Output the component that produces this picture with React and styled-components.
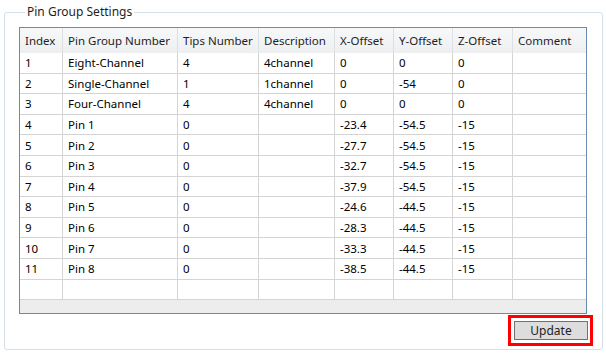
import styled, { createGlobalStyle } from "styled-components";

const GlobalStyle = createGlobalStyle`
  html, body {
    margin: 0;
    padding: 0;
    background: #ffffff;
  }
  body {
    font-family: "Segoe UI", "Noto Sans", "Liberation Sans", sans-serif;
    font-size: 11.5px;
    color: #000000;
  }
`;

const columns = [
  { key: "index", title: "Index", width: 43 },
  { key: "name", title: "Pin Group Number", width: 115 },
  { key: "tips", title: "Tips Number", width: 81 },
  { key: "desc", title: "Description", width: 76 },
  { key: "x", title: "X-Offset", width: 59 },
  { key: "y", title: "Y-Offset", width: 59 },
  { key: "z", title: "Z-Offset", width: 60 },
  { key: "comment", title: "Comment", width: 73 },
];

const rows = [
  ["1", "Eight-Channel", "4", "4channel", "0", "0", "0", ""],
  ["2", "Single-Channel", "1", "1channel", "0", "-54", "0", ""],
  ["3", "Four-Channel", "4", "4channel", "0", "0", "0", ""],
  ["4", "Pin 1", "0", "", "-23.4", "-54.5", "-15", ""],
  ["5", "Pin 2", "0", "", "-27.7", "-54.5", "-15", ""],
  ["6", "Pin 3", "0", "", "-32.7", "-54.5", "-15", ""],
  ["7", "Pin 4", "0", "", "-37.9", "-54.5", "-15", ""],
  ["8", "Pin 5", "0", "", "-24.6", "-44.5", "-15", ""],
  ["9", "Pin 6", "0", "", "-28.3", "-44.5", "-15", ""],
  ["10", "Pin 7", "0", "", "-33.3", "-44.5", "-15", ""],
  ["11", "Pin 8", "0", "", "-38.5", "-44.5", "-15", ""],
  ["", "", "", "", "", "", "", ""],
];

const template = columns.map((c) => `${c.width}px`).join(" ");

export default function App() {
  return (
    <>
      <GlobalStyle />
      <Page>
        <GroupBox>
          <Legend>Pin Group Settings</Legend>
          <Grid>
            <HeaderRow>
              {columns.map((c, i) => (
                <HeaderCell key={c.key} $last={i === columns.length - 1}>
                  {c.title}
                </HeaderCell>
              ))}
            </HeaderRow>
            {rows.map((r, ri) => (
              <Row key={ri}>
                {r.map((v, ci) => (
                  <Cell key={ci} $last={ci === r.length - 1}>
                    {v}
                  </Cell>
                ))}
              </Row>
            ))}
            <ScrollArea />
          </Grid>
          <ButtonRow>
            <Highlight>
              <Button>Update</Button>
            </Highlight>
          </ButtonRow>
        </GroupBox>
      </Page>
    </>
  );
}

const Page = styled.div`
  width: 606px;
  height: 356px;
  box-sizing: border-box;
  padding: 4px 3px 0 4px;
`;

const GroupBox = styled.fieldset`
  margin: 0;
  height: 346px;
  box-sizing: border-box;
  border: 1px solid #d5dfe5;
  border-radius: 3px;
  padding: 7px 9px 2px 14px;
  min-width: 0;
`;

const Legend = styled.legend`
  margin-left: 6px;
  padding: 0 2px;
  font-size: 12px;
  line-height: 16px;
  color: #1e1e1e;
`;

const Grid = styled.div`
  width: 568px;
  box-sizing: border-box;
  border: 1px solid #688caf;
  background: #ffffff;
`;

const HeaderRow = styled.div`
  display: grid;
  grid-template-columns: ${template};
  height: 25px;
  background: linear-gradient(#f7f8f9, #eeeff0);
`;

const HeaderCell = styled.div`
  display: flex;
  align-items: center;
  padding-left: 5px;
  border-right: ${(p) => (p.$last ? "none" : "1px solid #dde0e3")};
  color: #1e1e1e;
  white-space: nowrap;
  overflow: hidden;
`;

const Row = styled.div`
  display: grid;
  grid-template-columns: ${template};
  height: 20.6px;
  box-sizing: border-box;
  border-bottom: 1px solid #d4d4d4;
`;

const Cell = styled.div`
  display: flex;
  align-items: center;
  padding-left: 5px;
  border-right: ${(p) => (p.$last ? "none" : "1px solid #d4d4d4")};
  white-space: nowrap;
  overflow: hidden;
`;

const ScrollArea = styled.div`
  height: 13px;
  background: #ededed;
`;

const ButtonRow = styled.div`
  display: flex;
  justify-content: flex-end;
  margin-top: 1px;
`;

const Highlight = styled.div`
  border: 3px solid #ff0000;
  padding: 3px 2px 3px 3px;
  display: flex;
`;

const Button = styled.button`
  width: 74px;
  height: 19px;
  box-sizing: border-box;
  border: 1px solid #707070;
  background: #dddddd;
  font-family: inherit;
  font-size: 12px;
  color: #1e1e1e;
  padding: 0;
  line-height: 16px;
`;
